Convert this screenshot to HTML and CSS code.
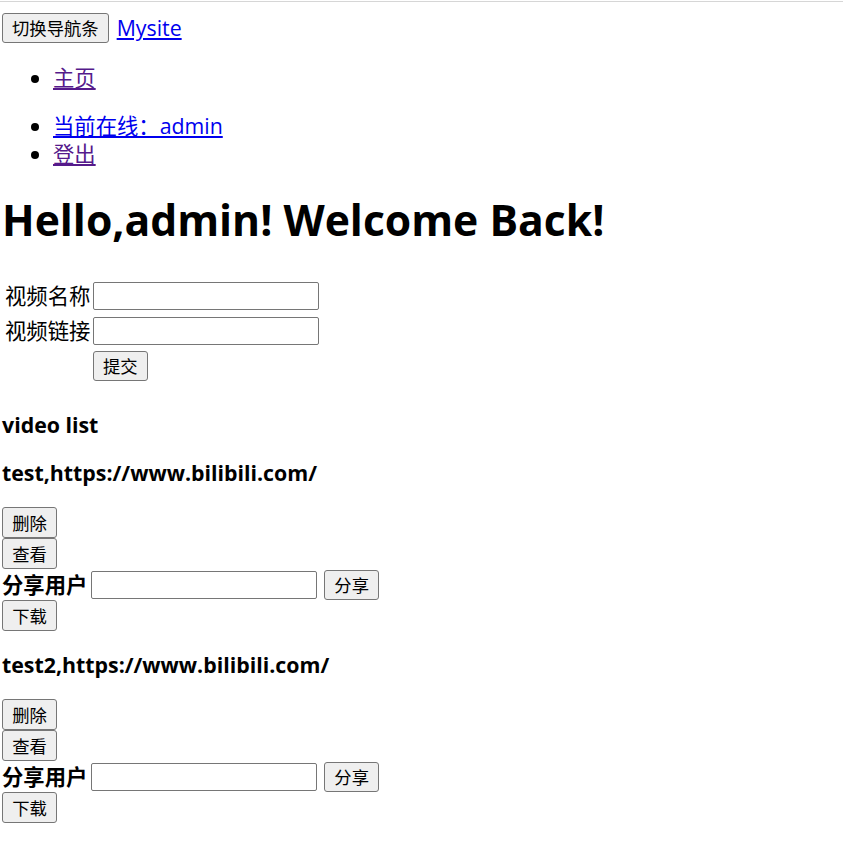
FILE: index.html
```html
<!DOCTYPE html>
<html lang="zh-CN">
<head>
<meta charset="utf-8">
<title>Mysite</title>
<link rel="stylesheet" href="styles.css">
</head>
<body>
<div class="topline"></div>
<div class="header">
  <button class="btn">切换导航条</button>
  <a class="link" href="#">Mysite</a>
</div>
<ul class="nav nav1">
  <li><a class="link visited" href="#">主页</a></li>
</ul>
<ul class="nav nav2">
  <li><a class="link" href="#">当前在线：admin</a></li>
  <li><a class="link visited" href="#">登出</a></li>
</ul>
<h1 class="title">Hello,admin! Welcome Back!</h1>
<div class="form">
  <div class="frow"><span class="flabel">视频名称</span><input class="field" type="text"></div>
  <div class="frow"><span class="flabel">视频链接</span><input class="field" type="text"></div>
  <div class="frow"><span class="flabel"></span><button class="btn">提交</button></div>
</div>
<div class="list-title">video list</div>
<div class="item">
  <div class="item-title">test,https://www.bilibili.com/</div>
  <button class="btn block">删除</button>
  <button class="btn block">查看</button>
  <div class="share"><span class="share-label">分享用户</span><input class="field share-field" type="text"><button class="btn">分享</button></div>
  <button class="btn block">下载</button>
</div>
<div class="item">
  <div class="item-title">test2,https://www.bilibili.com/</div>
  <button class="btn block">删除</button>
  <button class="btn block">查看</button>
  <div class="share"><span class="share-label">分享用户</span><input class="field share-field" type="text"><button class="btn">分享</button></div>
  <button class="btn block">下载</button>
</div>
</body>
</html>
```
FILE: styles.css
```css
html, body {
  margin: 0;
  padding: 0;
  background: #fff;
}
body {
  padding: 0 2px;
  font-family: "Open Sans", "Noto Sans CJK SC", sans-serif;
  font-size: 21.33px;
  line-height: 28px;
  color: #000;
}
.topline {
  margin: 1px -2px 0;
  border-top: 1px solid #d6d6d6;
}
.btn {
  font-family: "Open Sans", "Noto Sans CJK SC", sans-serif;
  font-size: 17.33px;
  line-height: 24px;
  height: 30px;
  padding: 0 9px;
  background: #efefef;
  border: 1px solid #767676;
  border-radius: 3px;
  color: #000;
  margin: 0;
}
.block {
  display: block;
  width: 55px;
  height: 31px;
  padding: 0;
}
.link {
  color: #0000ee;
  text-decoration: underline;
}
.link.visited {
  color: #551a8b;
}
.header {
  margin-top: 11px;
  display: flex;
  align-items: center;
  gap: 8px;
  height: 30px;
}
.nav {
  margin: 0;
  padding-left: 51px;
}
.nav1 {
  margin-top: 21px;
}
.nav2 {
  margin-top: 20px;
}
.title {
  font-size: 42.67px;
  line-height: 50px;
  font-weight: 700;
  margin: 27px 0 0;
}
.form {
  margin-top: 36px;
  display: flex;
  flex-direction: column;
  gap: 6px;
}
.frow {
  display: flex;
  align-items: center;
  height: 29px;
}
.flabel {
  width: 91px;
  padding-left: 3px;
  box-sizing: border-box;
}
.field {
  width: 226px;
  height: 28px;
  box-sizing: border-box;
  border: 1px solid #767676;
  border-radius: 2px;
  margin: 0;
  padding: 0 2px;
}
.list-title {
  font-weight: 700;
  margin-top: 31px;
}
.item-title {
  font-weight: 700;
  margin: 20px 0 20px;
}
.item + .item .item-title {
  margin-top: 20px;
}
.share {
  display: flex;
  align-items: center;
  height: 31px;
}
.share-label {
  font-weight: 700;
  margin-right: 4px;
}
.share-field {
  margin-right: 7px;
}
```
